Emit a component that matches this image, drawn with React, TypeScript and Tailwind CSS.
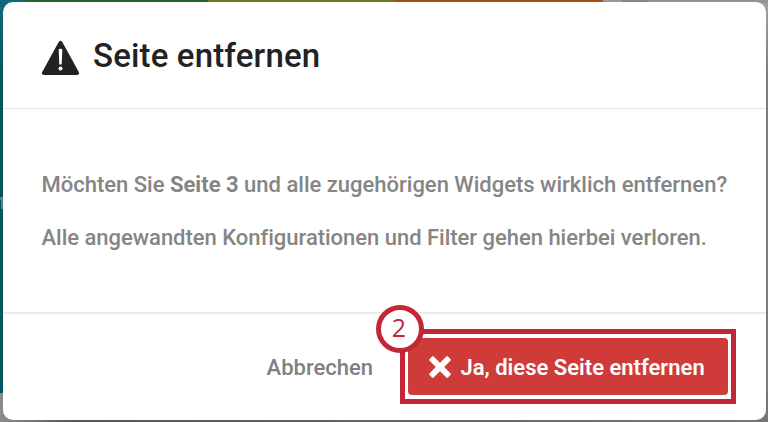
import React from "react";

// Widget colours that peek out behind the dialog, left to right
const backdropTiles = [
  { className: "w-[26px] bg-[#116a7a]" },
  { className: "w-[182px] bg-[#285f30]" },
  { className: "w-[187px] bg-[#737523]" },
  { className: "w-[208px] bg-[#a0501b]" },
  { className: "w-[19px] bg-[#999999]" },
  { className: "w-[25px] bg-[#888592]" },
  { className: "flex-1 bg-[#929292]" },
];

function WarningIcon() {
  return (
    <svg className="mt-[6px] h-[36px] w-[39px] shrink-0" viewBox="0 0 39 36" fill="none">
      <path
        d="M17.7 1.9Q19.5-.6 21.3 1.9L37.8 32Q38.8 35 36 35H3Q.2 35 1.2 32Z"
        fill="#222222"
      />
      <path d="M17.7 10Q17.7 8.7 19.5 8.7T21.3 10L20.7 24.6H18.3Z" fill="#ffffff" />
      <circle cx="19.5" cy="28.6" r="2" fill="#ffffff" />
    </svg>
  );
}

function CrossIcon() {
  return (
    <svg className="h-[22px] w-[22px] shrink-0" viewBox="0 0 22 22" fill="#ffffff">
      <rect x="-2" y="8.1" width="26" height="5.8" rx="1.2" transform="rotate(45 11 11)" />
      <rect x="-2" y="8.1" width="26" height="5.8" rx="1.2" transform="rotate(-45 11 11)" />
    </svg>
  );
}

function Backdrop() {
  return (
    <div className="absolute inset-0 flex flex-col bg-[#7b7b7b]">
      <div className="flex h-[3px]">
        {backdropTiles.map((tile, i) => (
          <div key={i} className={tile.className} />
        ))}
      </div>
      <div className="flex h-[390px] justify-between">
        <div className="flex w-[16px] flex-col bg-linear-to-b from-[#116a7a] to-[#055461] to-20% pt-[194px]">
          <div className="h-[3px] w-[3px] bg-[#5f7f85]" />
          <div className="ml-[1px] h-[9px] w-[2px] bg-[#5f7f85]" />
        </div>
        <div className="w-[16px] bg-linear-to-b from-[#a0a0a0] to-[#7b7b7b] to-20%" />
      </div>
      <div className="flex-1 bg-linear-to-r from-[#8b8b8b] via-[#565656] via-10% to-[#777777]" />
    </div>
  );
}

export default function App() {
  return (
    <div className="relative h-[422px] w-[768px] overflow-hidden font-['Roboto',sans-serif]">
      <Backdrop />
      <div className="relative ml-[3px] flex h-[422px] w-[763px] flex-col pt-[1.5px] pb-[2.5px]">
        <div className="flex flex-1 flex-col rounded-[10px] bg-white">
          <header className="flex h-[107px] shrink-0 items-center gap-[13px] border-b border-[#e5e5e5] pl-[38px]">
            <WarningIcon />
            <h1 className="pt-[2px] text-[33px] leading-[40px] font-medium tracking-[0.15px] whitespace-nowrap text-[#222222]">
              Seite entfernen
            </h1>
          </header>

          <div className="flex h-[205px] shrink-0 flex-col justify-center gap-[25px] border-b-2 border-[#ebebeb] pt-[3px] pl-[38.5px] text-[22px] leading-[28px] font-medium whitespace-nowrap text-[#858585]">
            <p>
              Möchten Sie <b className="font-bold">Seite 3</b> und alle zugehörigen Widgets wirklich entfernen?
            </p>
            <p className="tracking-[-0.02px]">Alle angewandten Konfigurationen und Filter gehen hierbei verloren.</p>
          </div>

          <footer className="flex flex-1 items-center justify-end pr-[30px]">
            <button className="mr-[27px] pt-[1px] text-[22px] font-medium whitespace-nowrap text-[#808080]">
              Abbrechen
            </button>
            <div className="relative flex h-[75px] w-[336px] border-5 border-[#c22637] p-[3px] pt-[4px]">
              <button className="flex h-[57px] flex-1 items-center rounded-[4px] bg-[#cf3b39] pl-[20.5px] text-[22px] font-semibold whitespace-nowrap text-white">
                <CrossIcon />
                <span className="ml-[10px] pt-[1px]">Ja, diese Seite entfernen</span>
              </button>
              <span className="absolute -top-[29px] -left-[29px] flex h-[48px] w-[48px] items-center justify-center rounded-full border-5 border-[#c22637] bg-white pr-[2px] pb-[3px] font-['Open_Sans',sans-serif] text-[25px] text-[#c22637]">
                2
              </span>
            </div>
          </footer>
        </div>
      </div>
    </div>
  );
}
